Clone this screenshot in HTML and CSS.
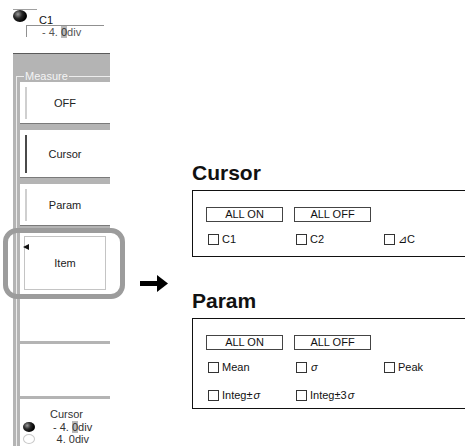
FILE: index.html
```html
<!DOCTYPE html>
<html>
  <head>
    <title>Measure Item</title>

    <!-- Setup some styles -->
    <link rel="stylesheet" href="styles.css">
  </head>
  <body>
    <div class="page">

      <!-- Soft key menu -->
      <div class="left">
        <div class="trace">
          <div class="trace-head">
            <div class="trace-mark"><span class="dot"></span></div>
            <span class="trace-name">C1</span>
          </div>
          <div class="trace-value">- 4. <span class="hl">0</span>div</div>
        </div>

        <div class="panel">
          <div class="group-title"><span>Measure</span></div>
          <div class="group-body">
            <div class="key">OFF</div>
            <div class="key key-on">Cursor</div>
            <div class="key">Param</div>
            <div class="key-item"><span class="tri"></span>Item</div>
            <div class="key-blank key-blank-a"></div>
            <div class="key-blank key-blank-b"></div>
            <div class="readout">
              <div class="readout-title">Cursor</div>
              <div class="readout-row"><span class="dot dot-small"></span><span class="readout-val">- 4. <span class="hl">0</span>div</span></div>
              <div class="readout-row"><span class="ring"></span><span class="readout-val">4. 0div</span></div>
            </div>
          </div>
        </div>
      </div>

      <!-- Arrow -->
      <div class="arrow">
        <svg width="28" height="17" viewBox="0 0 28 17">
          <rect x="0" y="6" width="18" height="5" fill="#000"/>
          <polygon points="17,0 28,8.5 17,17" fill="#000"/>
        </svg>
      </div>

      <!-- Item dialogs -->
      <div class="right">
        <h2 class="section-title">Cursor</h2>
        <div class="section-box">
          <div class="btn-row">
            <div class="btn">ALL ON</div>
            <div class="btn">ALL OFF</div>
          </div>
          <div class="check-rows">
            <div class="check-row">
              <label class="check"><span class="cb"></span>C1</label>
              <label class="check"><span class="cb"></span>C2</label>
              <label class="check"><span class="cb"></span>⊿C</label>
            </div>
          </div>
        </div>

        <h2 class="section-title section-title-next">Param</h2>
        <div class="section-box section-box-param">
          <div class="btn-row">
            <div class="btn">ALL ON</div>
            <div class="btn">ALL OFF</div>
          </div>
          <div class="check-rows">
            <div class="check-row">
              <label class="check"><span class="cb"></span>Mean</label>
              <label class="check"><span class="cb"></span><span class="sym">σ</span></label>
              <label class="check"><span class="cb"></span>Peak</label>
            </div>
            <div class="check-row">
              <label class="check"><span class="cb"></span>Integ±<span class="sym">σ</span></label>
              <label class="check"><span class="cb"></span>Integ±3<span class="sym">σ</span></label>
            </div>
          </div>
        </div>
      </div>

    </div>
  </body>
</html>
```

FILE: styles.css
```css
html, body {
  margin: 0;
  overflow: hidden;
}
body {
  width: 465px;
  height: 446px;
  background: #fff;
  color: #222;
  font-family: "Liberation Sans", Arial, Helvetica, sans-serif;
  font-size: 11px;
}
.page {
  display: flex;
  height: 446px;
}

/* left menu */
.left {
  width: 130px;
  flex: none;
  display: flex;
  flex-direction: column;
}
.trace {
  height: 53px;
  box-sizing: border-box;
  padding: 9px 0 0 13px;
}
.trace-head {
  display: flex;
  height: 13px;
}
.trace-mark {
  width: 24px;
  height: 13px;
  box-sizing: border-box;
  border-top: 1px solid #a0a0a0;
}
.dot {
  display: block;
  width: 14px;
  height: 12px;
  border-radius: 50%;
  background: radial-gradient(circle at 35% 35%, #9a9a9a 0, #2a2a2a 35%, #000 70%);
}
.trace-name {
  margin: 6px 0 0 2px;
  line-height: 11px;
  color: #111;
}
.trace-value {
  margin: 3px 0 0 13px;
  width: 78px;
  height: 12px;
  box-sizing: border-box;
  border-top: 1px solid #909090;
  border-left: 1px solid #909090;
  padding-left: 15px;
  line-height: 12px;
  color: #555;
  white-space: pre;
}
.hl {
  background: #b8b8b8;
  color: #333;
}

.panel {
  margin-left: 13px;
  width: 97px;
  flex: 1;
  box-sizing: border-box;
  background: #b4b4b4;
  border-top: 1px solid #5a5a5a;
  padding: 16px 0 0 3px;
  display: flex;
  flex-direction: column;
}
.group-title {
  display: flex;
  height: 12px;
  line-height: 12px;
  color: #f4f4f4;
}
.group-title::before,
.group-title::after {
  content: "";
  height: 6px;
  align-self: flex-end;
  box-sizing: border-box;
  border-top: 1px solid #ececec;
}
.group-title::before {
  width: 8px;
  margin-right: 1px;
  border-left: 1px solid #ececec;
}
.group-title::after {
  flex: 1;
  margin-left: 1px;
}
.group-body {
  flex: 1;
  display: flex;
  flex-direction: column;
  border-left: 1px solid #ececec;
  padding-left: 3px;
}
.key {
  position: relative;
  display: flex;
  align-items: center;
  justify-content: center;
  height: 42px;
  box-sizing: border-box;
  margin-bottom: 6px;
  background: #fff;
  border-bottom: 1px solid #7a7a7a;
  color: #222;
}
.key::before {
  content: "";
  position: absolute;
  left: 5px;
  top: 5px;
  bottom: 4px;
  width: 2px;
  background: #cfcfcf;
}
.key-on {
  height: 48px;
}
.key-on::before {
  background: #4a4a4a;
}
.key-item {
  position: relative;
  display: flex;
  align-items: center;
  justify-content: center;
  height: 62px;
  margin-bottom: 3px;
  background: #fff;
  box-shadow: inset 0 0 0 4px #fff, inset 0 0 0 5px #c4c4c4;
  color: #222;
}
/* highlight ring round the Item key */
.key-item::after {
  content: "";
  position: absolute;
  left: -17px;
  top: -4px;
  width: 122px;
  height: 71px;
  box-sizing: border-box;
  border: 5px solid #9c9c9c;
  border-radius: 14px;
}
.tri {
  position: absolute;
  left: 3px;
  top: 12px;
  border-top: 3.5px solid transparent;
  border-bottom: 3.5px solid transparent;
  border-right: 6px solid #111;
}
.key-blank {
  background: #fff;
  margin-bottom: 3px;
}
.key-blank-a {
  height: 44px;
}
.key-blank-b {
  height: 52px;
}
.readout {
  flex: 1;
  background: #fff;
  padding-top: 9px;
}
.readout-title {
  margin-left: 30px;
  line-height: 13px;
  color: #333;
}
.readout-row {
  display: flex;
  align-items: center;
  height: 12px;
}
.dot-small {
  width: 12px;
  height: 10px;
  margin-left: 3px;
}
.ring {
  width: 12px;
  height: 10px;
  box-sizing: border-box;
  margin-left: 3px;
  border-radius: 50%;
  border: 1px solid #c8c8c8;
}
.readout-val {
  width: 36px;
  margin-left: 18px;
  text-align: right;
  white-space: pre;
  color: #333;
}

/* arrow */
.arrow {
  width: 52px;
  flex: none;
  padding: 275px 0 0 10px;
}

/* right dialogs */
.right {
  flex: 1;
  padding-top: 161px;
}
.section-title {
  margin: 0 0 5px 0;
  font-size: 21px;
  line-height: 24px;
  font-weight: bold;
  color: #111;
}
.section-title-next {
  margin-top: 32px;
}
.section-box {
  width: 290px;
  box-sizing: border-box;
  border: 1px solid #111;
  padding: 16px 0 10px 13px;
}
.section-box-param {
  padding-bottom: 6px;
}
.btn-row {
  display: flex;
  gap: 11px;
  margin-bottom: 11px;
}
.btn {
  width: 77px;
  height: 15px;
  box-sizing: border-box;
  border: 1px solid #444;
  font-size: 11px;
  line-height: 13px;
  text-align: center;
  color: #111;
}
.check-rows {
  display: flex;
  flex-direction: column;
  gap: 15px;
}
.check-row {
  display: grid;
  grid-template-columns: 88px 88px 88px;
  padding-left: 2px;
  height: 13px;
}
.check {
  display: flex;
  align-items: center;
  line-height: 13px;
  color: #111;
}
.cb {
  width: 11px;
  height: 11px;
  box-sizing: border-box;
  border: 1px solid #333;
  margin-right: 3px;
}
.sym {
  font-style: italic;
  margin-left: 1px;
}
```
